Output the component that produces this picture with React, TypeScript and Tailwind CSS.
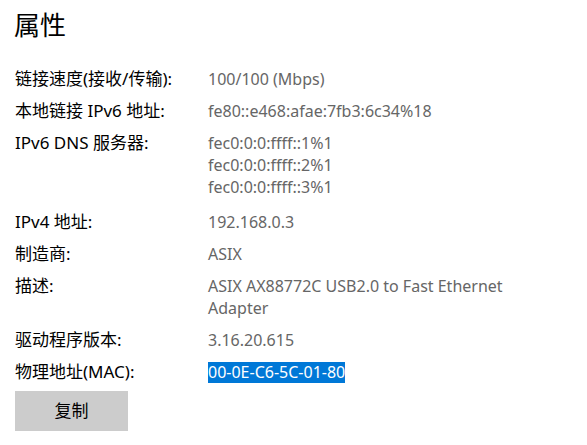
import React from "react";

interface Prop {
  label: string;
  values: string[];
  selected?: boolean;
  extraTop?: boolean;
}

const props: Prop[] = [
  { label: "链接速度(接收/传输):", values: ["100/100 (Mbps)"] },
  { label: "本地链接 IPv6 地址:", values: ["fe80::e468:afae:7fb3:6c34%18"] },
  {
    label: "IPv6 DNS 服务器:",
    values: ["fec0:0:0:ffff::1%1", "fec0:0:0:ffff::2%1", "fec0:0:0:ffff::3%1"],
  },
  { label: "IPv4 地址:", values: ["192.168.0.3"], extraTop: true },
  { label: "制造商:", values: ["ASIX"] },
  { label: "描述:", values: ["ASIX AX88772C USB2.0 to Fast Ethernet Adapter"] },
  { label: "驱动程序版本:", values: ["3.16.20.615"] },
  { label: "物理地址(MAC):", values: ["00-0E-C6-5C-01-80"], selected: true },
];

const font = {
  fontFamily: '"Noto Sans", "Noto Sans CJK SC", sans-serif',
};

export default function App() {
  return (
    <div className="w-[587px] h-[445px] bg-white overflow-hidden pl-[15px]" style={font}>
      {/* Title */}
      <h1 className="text-[26px] leading-[34px] text-black pt-[8px] -ml-[1px]">属性</h1>

      {/* Property rows */}
      <div className="mt-[26px] flex flex-col gap-[10px]">
        {props.map((p) => (
          <div
            key={p.label}
            className={`flex leading-[22px] ${p.extraTop ? "mt-[3px]" : ""}`}
          >
            <div className="w-[193px] shrink-0 text-black text-[17px]">{p.label}</div>
            <div className="w-[330px] text-[#666666] text-[16px]">
              {p.values.map((v) =>
                p.selected ? (
                  <span key={v} className="bg-[#0078d7] text-white inline-block leading-[21px]">
                    {v}
                  </span>
                ) : (
                  <div key={v}>{v}</div>
                )
              )}
            </div>
          </div>
        ))}
      </div>

      {/* Copy button */}
      <button className="mt-[8px] w-[113px] h-[40px] bg-[#cccccc] text-black text-[17px]">
        复制
      </button>
    </div>
  );
}
